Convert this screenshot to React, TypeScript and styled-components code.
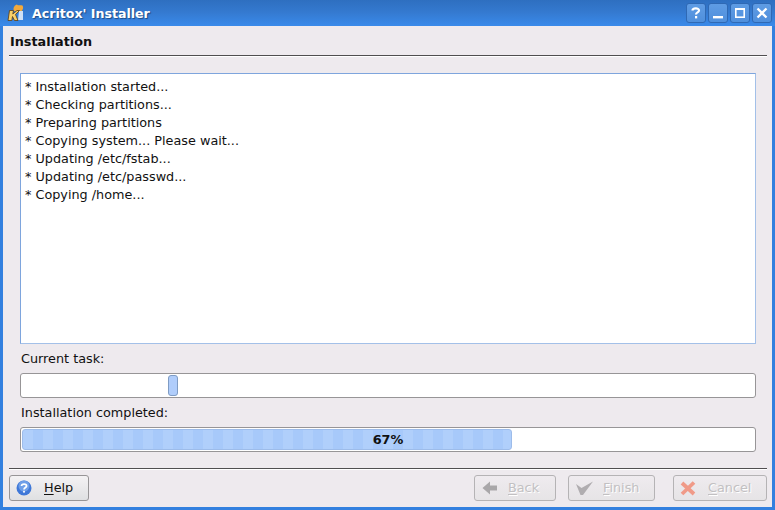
// App.tsx
import React from "react";
import styled, { createGlobalStyle } from "styled-components";

const GlobalStyle = createGlobalStyle`
  html, body {
    margin: 0;
    padding: 0;
    background: #eeeaee;
  }
  * {
    box-sizing: border-box;
  }
`;

const logLines = [
  "* Installation started...",
  "* Checking partitions...",
  "* Preparing partitions",
  "* Copying system... Please wait...",
  "* Updating /etc/fstab...",
  "* Updating /etc/passwd...",
  "* Copying /home...",
];

const App = () => {
  return (
    <Window>
      <GlobalStyle />
      <TitleBar>
        <LogoIcon />
        <Title>Acritox' Installer</Title>
        <TitleButtons>
          <TitleButton>
            <svg width="14" height="14" viewBox="0 0 14 14">
              <path d="M3.5 4.5 C3.5 2 10 1.5 10 4.5 C10 6.5 7 6.3 7 8.5" fill="none" stroke="#fff" strokeWidth="2.2" />
              <rect x="6" y="10" width="2.2" height="2.4" fill="#fff" />
            </svg>
          </TitleButton>
          <TitleButton>
            <svg width="14" height="14" viewBox="0 0 14 14">
              <rect x="2" y="10" width="10" height="2.4" fill="#fff" />
            </svg>
          </TitleButton>
          <TitleButton>
            <svg width="14" height="14" viewBox="0 0 14 14">
              <rect x="2.8" y="2.8" width="8.4" height="8.4" fill="none" stroke="#fff" strokeWidth="1.6" />
              <rect x="2" y="2" width="10" height="2" fill="#fff" />
            </svg>
          </TitleButton>
          <TitleButton>
            <svg width="14" height="14" viewBox="0 0 14 14">
              <path d="M2.5 2.5 L11.5 11.5 M11.5 2.5 L2.5 11.5" stroke="#fff" strokeWidth="2.3" />
            </svg>
          </TitleButton>
        </TitleButtons>
      </TitleBar>

      <Body>
        <PageHeading>Installation</PageHeading>
        <Rule />
        <Content>
          <LogBox>
            {logLines.map((line) => (
              <LogLine key={line}>{line}</LogLine>
            ))}
          </LogBox>
          <FieldLabel>Current task:</FieldLabel>
          <Track>
            <BusyThumb />
          </Track>
          <FieldLabel>Installation completed:</FieldLabel>
          <Track>
            <ProgressFill style={{ width: `${(490 / 732) * 100}%` }} />
            <ProgressText>67%</ProgressText>
          </Track>
        </Content>
        <Rule />
        <ButtonRow>
          <Button $width={80} $gap={12}>
            <HelpIcon />
            <ButtonLabel>
              <u>H</u>elp
            </ButtonLabel>
          </Button>
          <Spacer />
          <Button $width={82} $gap={9} $disabled>
            <svg width="18" height="18" viewBox="0 0 18 18">
              <path d="M1.5 9 L9 2.5 V6.5 H16 V11.5 H9 V15.5 Z" fill="#a9a7a9" />
            </svg>
            <ButtonLabel>
              <u>B</u>ack
            </ButtonLabel>
          </Button>
          <Button $width={87} $gap={8} $disabled>
            <svg width="20" height="18" viewBox="0 0 20 18">
              <path d="M1 5 L6.5 9 L18 2.5 L8 16 H5.5 Z" fill="#b0adb0" />
            </svg>
            <ButtonLabel>
              <u>F</u>inish
            </ButtonLabel>
          </Button>
          <Button $width={94} $gap={12} $disabled $leftGap={18}>
            <svg width="16" height="16" viewBox="0 0 16 16">
              <path d="M2 3 L14 14 M14 2.5 L2 14" stroke="#f09a88" strokeWidth="3.8" />
            </svg>
            <ButtonLabel>
              <u>C</u>ancel
            </ButtonLabel>
          </Button>
        </ButtonRow>
      </Body>
    </Window>
  );
};

export default App;

const LogoIcon = () => (
  <svg width="18" height="18" viewBox="0 0 18 18">
    <path d="M7 7 C5.5 3.5 8 1 10 0.5 C10.5 2 13 0.5 15.5 1.5 C17 4 15.5 7 13 8 Z" fill="#f2a93c" />
    <path d="M12 7 H16 V16 H11 Z" fill="#cfe0f5" />
    <path d="M2.5 6.5 H6.5 L5.8 10 L10 6.5 H12.5 L8.5 10.5 L11 16.5 H7.5 L5.5 12.5 L4.8 16.5 H1 Z" fill="#f7cf6a" stroke="#5a3a10" strokeWidth="0.8" />
  </svg>
);

const HelpIcon = () => (
  <svg width="16" height="16" viewBox="0 0 16 16">
    <circle cx="8" cy="8" r="7.5" fill="#3f78d8" />
    <circle cx="8" cy="6" r="5.5" fill="#6f9fe8" />
    <path d="M5.5 6 C5.5 3.4 10.6 3.4 10.6 6 C10.6 7.6 8 7.6 8 9.6" fill="none" stroke="#fff" strokeWidth="1.7" />
    <rect x="7.1" y="10.8" width="1.8" height="1.8" fill="#fff" />
  </svg>
);

const Window = styled.div`
  width: 775px;
  height: 510px;
  display: flex;
  flex-direction: column;
  overflow: hidden;
  background: #3380df;
  font-family: "DejaVu Sans", sans-serif;
  font-size: 12.8px;
  color: #111;
`;

const TitleBar = styled.div`
  height: 26px;
  flex: none;
  display: flex;
  align-items: center;
  padding: 0 3px 0 7px;
  background: linear-gradient(to bottom, #2e6fc0 0%, #3479cf 45%, #3a8aea 100%);
`;

const Title = styled.div`
  margin-left: 7px;
  font-size: 12.6px;
  font-weight: bold;
  color: #fff;
  text-shadow: 1px 1px 1px #1d4a85;
`;

const TitleButtons = styled.div`
  margin-left: auto;
  display: flex;
  gap: 2px;
`;

const TitleButton = styled.div`
  width: 20px;
  height: 20px;
  display: flex;
  align-items: center;
  justify-content: center;
  border: 1px solid #2f69b4;
  border-radius: 3px;
  background: linear-gradient(to bottom, #5f9ce4, #4f8fdc);
`;

const Body = styled.div`
  flex: 1;
  margin: 0 3px 3px;
  padding: 0 5px 6px 6px;
  display: flex;
  flex-direction: column;
  background: #eeeaee;
`;

const PageHeading = styled.div`
  height: 29px;
  padding: 8px 0 0 1px;
  font-weight: bold;
  line-height: 15px;
`;

const Rule = styled.div`
  height: 2px;
  flex: none;
  background: linear-gradient(to bottom, #504e50 50%, #fff 50%);
`;

const Content = styled.div`
  flex: 1;
  display: flex;
  flex-direction: column;
  padding: 16px 11px 0;
`;

const LogBox = styled.div`
  height: 271px;
  flex: none;
  padding: 4px 4px;
  background: #fff;
  border: 1px solid #a3c0e8;
  border-top-color: #7ea5dd;
  border-left-color: #7ea5dd;
`;

const LogLine = styled.div`
  height: 18px;
  line-height: 18px;
`;

const FieldLabel = styled.div`
  height: 29px;
  padding: 7px 1px 0;
  line-height: 15px;
`;

const Track = styled.div`
  position: relative;
  height: 25px;
  flex: none;
  padding: 1px;
  background: #fff;
  border: 1px solid #979597;
  border-radius: 3px;
`;

const BusyThumb = styled.div`
  width: 10px;
  height: 21px;
  margin-left: 146px;
  background: #b0cdfb;
  border: 1px solid #7f9cc4;
  border-radius: 3px;
`;

const ProgressFill = styled.div`
  height: 21px;
  border: 1px solid #9dbcea;
  border-radius: 3px;
  background: repeating-linear-gradient(
    to right,
    #b0cffb 0,
    #b0cffb 10px,
    #a7c9fa 10px,
    #a7c9fa 20px
  );
`;

const ProgressText = styled.div`
  position: absolute;
  inset: 0;
  text-align: center;
  line-height: 23px;
  font-weight: bold;
  color: #111;
`;

const ButtonRow = styled.div`
  display: flex;
  align-items: center;
  gap: 12px;
  padding-top: 5px;
`;

const Spacer = styled.div`
  flex: 1;
`;

const Button = styled.div<{ $width: number; $disabled?: boolean; $gap: number; $leftGap?: number }>`
  width: ${(p) => p.$width}px;
  height: 26px;
  flex: none;
  display: flex;
  align-items: center;
  gap: ${(p) => p.$gap}px;
  padding-left: 6px;
  margin-left: ${(p) => (p.$leftGap ? p.$leftGap - 12 : 0)}px;
  border: 1px solid ${(p) => (p.$disabled ? "#b5b3b5" : "#979597")};
  border-radius: 3px;
  color: ${(p) => (p.$disabled ? "#c2c0c2" : "#111")};
  text-shadow: ${(p) => (p.$disabled ? "1px 1px 0 #fff" : "none")};
  background: ${(p) =>
    p.$disabled
      ? "linear-gradient(to bottom, #efebef, #e6e4e6)"
      : "linear-gradient(to bottom, #f4f2f4, #dfe0e2)"};
`;

const ButtonLabel = styled.span`
  margin-bottom: 2px;

  u {
    text-underline-offset: 2px;
  }
`;
